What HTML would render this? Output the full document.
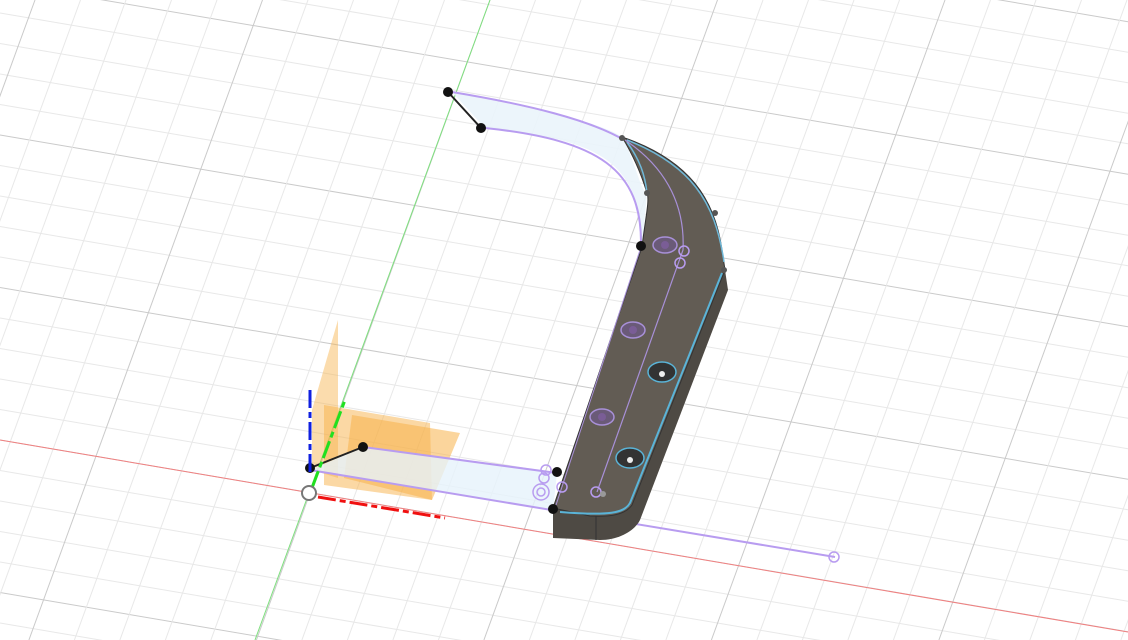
<!DOCTYPE html>
<html><head><meta charset="utf-8"><style>
html,body{margin:0;padding:0;background:#fff;width:1128px;height:640px;overflow:hidden;position:relative}
svg{display:block;position:absolute;left:0;top:0}
</style></head><body>
<svg id="s" width="1128" height="640" viewBox="0 0 1128 640" xmlns="http://www.w3.org/2000/svg">
<g id="grid"></g>
<line x1="0" y1="440" x2="1128" y2="632" stroke="#f08080" stroke-width="1"/>
<line x1="490" y1="0" x2="255" y2="640" stroke="#7ee07e" stroke-width="1"/>
<path d="M452,92 C540,110 600,122 622,137 C635,160 640,190 647,193 L642,247 C640,160 600,140 485,128 Z" fill="#eaf4fb" opacity="0.9"/>
<path d="M452,92 C530,105 590,120 624,140" fill="none" stroke="#b89cf0" stroke-width="2"/>
<path d="M485,128 C600,140 642,170 641,245" fill="none" stroke="#b89cf0" stroke-width="2"/>
<line x1="448" y1="92" x2="481" y2="128" stroke="#222" stroke-width="2"/>
<polygon points="338,320 338,478 312,470 312,410" fill="#f7b24a" opacity="0.45"/>
<polygon points="324,405 430,423 432,500 324,485" fill="#f7b24a" opacity="0.5"/>
<polygon points="352,415 460,433 432,500 344,478" fill="#f7b24a" opacity="0.55"/>
<polygon points="363,447 557,473 553,510 310,470" fill="#e6f2fb" opacity="0.8"/>
<line x1="363" y1="447" x2="557" y2="473" stroke="#b89cf0" stroke-width="2"/>
<line x1="310" y1="470" x2="835" y2="557" stroke="#b89cf0" stroke-width="2"/>
<line x1="310" y1="468" x2="363" y2="447" stroke="#222" stroke-width="2"/>
<path d="M725,270 L728,290 L640,520 C635,530 620,540 600,540 L553,538 L553,508 Z" fill="#4e4a44"/>
<line x1="596" y1="515" x2="596" y2="540" stroke="#333" stroke-width="1"/>
<path d="M622,137 C690,160 715,200 722,250 L725,270 L632,505 C625,515 610,517 590,516 L553,508 L642,247 C645,220 650,200 647,193 C640,170 630,150 622,137 Z" fill="#625c54" stroke="#333" stroke-width="1"/>
<path d="M722,273 L630,503 C624,513 610,516 560,512" fill="none" stroke="#5ab4d8" stroke-width="2"/>
<path d="M627,140 C690,165 715,200 724,262" fill="none" stroke="#6fb8d8" stroke-width="1.5"/>
<path d="M627,142 C640,160 645,175 647,193" fill="none" stroke="#6fb8d8" stroke-width="1.5"/>
<path d="M625,140 C670,170 685,210 683,250 L597,492" fill="none" stroke="#a890d8" stroke-width="1.2"/>
<path d="M640,250 L556,505" fill="none" stroke="#a890d8" stroke-width="1"/>
<g fill="#6a5a78" stroke="#a890d8" stroke-width="1.5">
<ellipse cx="665" cy="245" rx="12" ry="8"/><ellipse cx="633" cy="330" rx="12" ry="8"/><ellipse cx="602" cy="417" rx="12" ry="8"/>
</g>
<g fill="#7a5d96"><circle cx="665" cy="245" r="4"/><circle cx="633" cy="330" r="4"/><circle cx="602" cy="417" r="4"/></g>
<g><ellipse cx="662" cy="372" rx="14" ry="10" fill="#333" stroke="#5ab4d8" stroke-width="1.5"/><circle cx="662" cy="374" r="3" fill="#eee"/>
<ellipse cx="630" cy="458" rx="14" ry="10" fill="#333" stroke="#5ab4d8" stroke-width="1.5"/><circle cx="630" cy="460" r="3" fill="#eee"/></g>
<g fill="none" stroke="#b89cf0" stroke-width="1.5">
<circle cx="684" cy="251" r="5"/><circle cx="680" cy="263" r="5"/><circle cx="596" cy="492" r="5"/>
<circle cx="546" cy="470" r="5"/><circle cx="544" cy="478" r="5"/><circle cx="541" cy="492" r="8"/><circle cx="541" cy="492" r="4"/><circle cx="562" cy="487" r="5"/>
<circle cx="834" cy="557" r="5"/>
</g>
<circle cx="603" cy="494" r="3" fill="#999"/>
<g fill="#111"><circle cx="448" cy="92" r="5"/><circle cx="481" cy="128" r="5"/><circle cx="641" cy="246" r="5"/><circle cx="557" cy="472" r="5"/><circle cx="553" cy="509" r="5"/><circle cx="363" cy="447" r="5"/><circle cx="310" cy="468" r="5"/></g>
<g fill="#555"><circle cx="622" cy="138" r="3"/><circle cx="647" cy="193" r="3"/><circle cx="715" cy="213" r="3"/><circle cx="724" cy="270" r="3"/></g>
<line x1="310" y1="390" x2="310" y2="475" stroke="#1020e0" stroke-width="3" stroke-dasharray="18,4,6,4"/>
<line x1="312" y1="488" x2="345" y2="400" stroke="#20e020" stroke-width="3" stroke-dasharray="18,4,6,4"/>
<line x1="318" y1="497" x2="445" y2="518" stroke="#f01010" stroke-width="3" stroke-dasharray="18,4,6,4"/>
<circle cx="309" cy="493" r="7" fill="#fff" stroke="#777" stroke-width="2"/>
</svg>
<script>
(function(){
var g=document.getElementById('grid'),h='';
for(var k=-25;k<=10;k++){var y0=440+k*30.5;var c=(k%5==0)?'#cacaca':'#e8e8e8';
h+='<line x1="0" y1="'+y0+'" x2="1128" y2="'+(y0+0.17*1128)+'" stroke="'+c+'" stroke-width="1"/>';}
for(var k=-15;k<=25;k++){var x0=490+k*45.5;var c=(k%5==0)?'#cacaca':'#e8e8e8';
h+='<line x1="'+x0+'" y1="0" x2="'+(x0-0.365*640)+'" y2="640" stroke="'+c+'" stroke-width="1"/>';}
g.innerHTML=h;
})();
</script>
</body></html>
